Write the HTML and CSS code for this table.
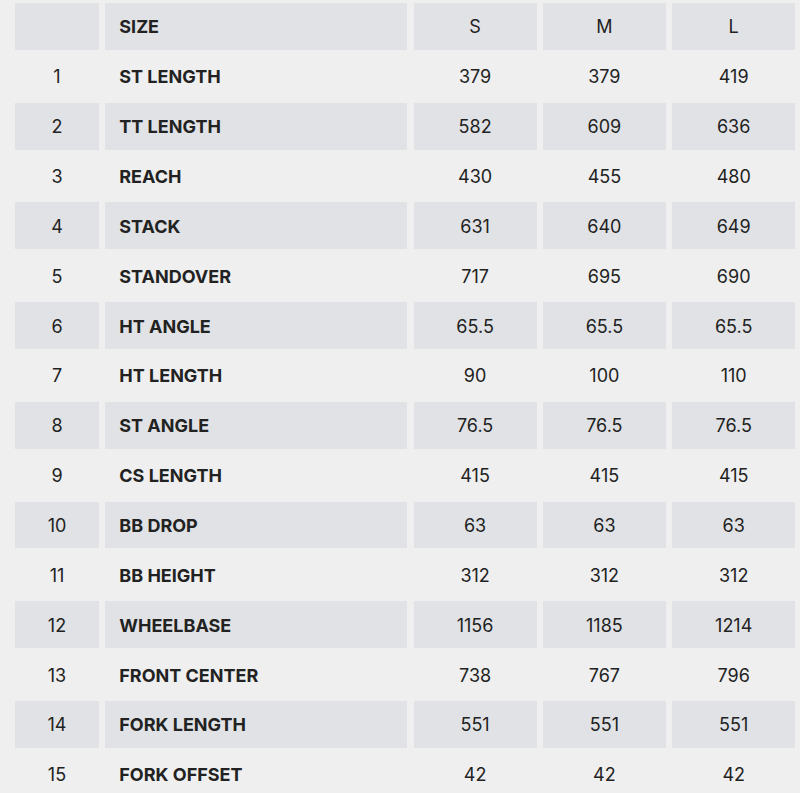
FILE: index.html
```html
<!DOCTYPE html>
<html>
<head>
<meta charset="utf-8">
<link rel="stylesheet" href="styles.css">
</head>
<body>
<div class="geo">
  <div class="row shade head"><div class="c num"></div><div class="c name">SIZE</div><div class="c val">S</div><div class="c val">M</div><div class="c val">L</div></div>
  <div class="row"><div class="c num">1</div><div class="c name">ST LENGTH</div><div class="c val">379</div><div class="c val">379</div><div class="c val">419</div></div>
  <div class="row shade"><div class="c num">2</div><div class="c name">TT LENGTH</div><div class="c val">582</div><div class="c val">609</div><div class="c val">636</div></div>
  <div class="row"><div class="c num">3</div><div class="c name">REACH</div><div class="c val">430</div><div class="c val">455</div><div class="c val">480</div></div>
  <div class="row shade"><div class="c num">4</div><div class="c name">STACK</div><div class="c val">631</div><div class="c val">640</div><div class="c val">649</div></div>
  <div class="row"><div class="c num">5</div><div class="c name">STANDOVER</div><div class="c val">717</div><div class="c val">695</div><div class="c val">690</div></div>
  <div class="row shade"><div class="c num">6</div><div class="c name">HT ANGLE</div><div class="c val">65.5</div><div class="c val">65.5</div><div class="c val">65.5</div></div>
  <div class="row"><div class="c num">7</div><div class="c name">HT LENGTH</div><div class="c val">90</div><div class="c val">100</div><div class="c val">110</div></div>
  <div class="row shade"><div class="c num">8</div><div class="c name">ST ANGLE</div><div class="c val">76.5</div><div class="c val">76.5</div><div class="c val">76.5</div></div>
  <div class="row"><div class="c num">9</div><div class="c name">CS LENGTH</div><div class="c val">415</div><div class="c val">415</div><div class="c val">415</div></div>
  <div class="row shade"><div class="c num">10</div><div class="c name">BB DROP</div><div class="c val">63</div><div class="c val">63</div><div class="c val">63</div></div>
  <div class="row"><div class="c num">11</div><div class="c name">BB HEIGHT</div><div class="c val">312</div><div class="c val">312</div><div class="c val">312</div></div>
  <div class="row shade"><div class="c num">12</div><div class="c name">WHEELBASE</div><div class="c val">1156</div><div class="c val">1185</div><div class="c val">1214</div></div>
  <div class="row"><div class="c num">13</div><div class="c name">FRONT CENTER</div><div class="c val">738</div><div class="c val">767</div><div class="c val">796</div></div>
  <div class="row shade"><div class="c num">14</div><div class="c name">FORK LENGTH</div><div class="c val">551</div><div class="c val">551</div><div class="c val">551</div></div>
  <div class="row"><div class="c num">15</div><div class="c name">FORK OFFSET</div><div class="c val">42</div><div class="c val">42</div><div class="c val">42</div></div>
</div>
</body>
</html>
```
FILE: styles.css
```css
html, body {
  margin: 0;
  padding: 0;
  background: #efefef;
}
body {
  font-family: "Inter", "Open Sans", sans-serif;
  color: #222222;
  font-size: 18px;
}
.geo {
  display: flex;
  flex-direction: column;
  gap: 3px;
  padding: 3px 0 0 15px;
}
.row {
  display: grid;
  grid-template-columns: 84px 302px 123px 123px 123px;
  column-gap: 6.3px;
  height: 46.86px;
}
.c {
  display: flex;
  align-items: center;
  padding-top: 1px;
}
.shade .c {
  background: #e1e2e5;
}
.num, .val {
  justify-content: center;
}
.name {
  padding-left: 14px;
  font-weight: 700;
}
```
